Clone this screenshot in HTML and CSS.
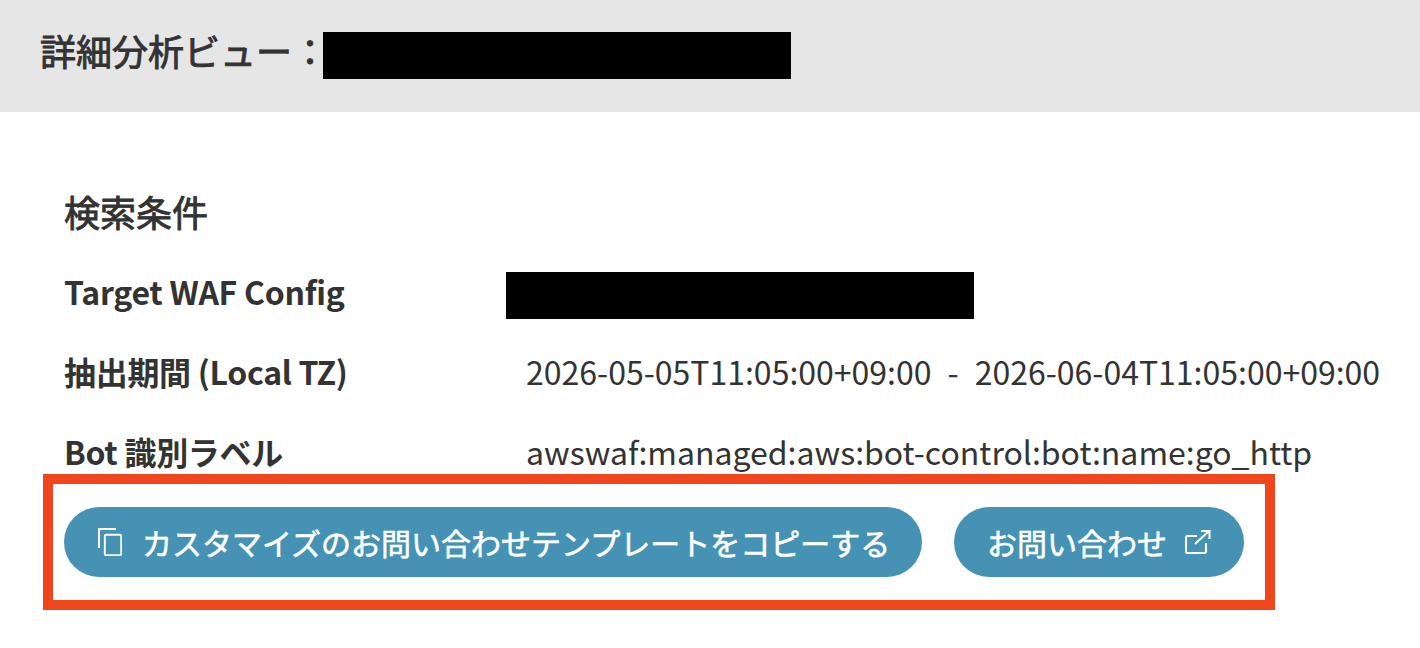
FILE: index.html
```html
<!DOCTYPE html>
<html lang="ja">
<head>
    <meta charset="UTF-8">
    <title>詳細分析ビュー</title>
    <link rel="stylesheet" href="styles.css">
</head>
<body>
    <div class="page">
        <header class="view-header">
            <h1>詳細分析ビュー：</h1>
            <div class="redacted"></div>
        </header>
        <section class="conditions">
            <h2>検索条件</h2>
            <div class="row">
                <div class="label">Target WAF Config</div>
                <div class="redacted redacted-config"></div>
            </div>
            <div class="row">
                <div class="label">抽出期間 (Local TZ)</div>
                <div class="value">2026-05-05T11:05:00+09:00<span class="sep">-</span>2026-06-04T11:05:00+09:00</div>
            </div>
            <div class="row">
                <div class="label">Bot 識別ラベル</div>
                <div class="value">awswaf:managed:aws:bot-control:bot:name:go_http</div>
            </div>
            <div class="actions">
                <button class="pill pill-copy">
                    <svg class="icon-copy" viewBox="0 0 24 28" fill="none" stroke="currentColor" stroke-width="1.9">
                        <path d="M1 20V1H18"/>
                        <rect x="6.8" y="6.8" width="16.4" height="20.4" rx="1.5"/>
                    </svg>
                    カスタマイズのお問い合わせテンプレートをコピーする
                </button>
                <button class="pill pill-contact">
                    お問い合わせ
                    <svg class="icon-external" viewBox="0 0 26 24" fill="none" stroke="currentColor" stroke-width="2.1">
                        <path d="M12 6H2.5A1.5 1.5 0 0 0 1 7.5v14A1.5 1.5 0 0 0 2.5 23h17a1.5 1.5 0 0 0 1.5-1.5V13"/>
                        <path d="M10 14L24 1M16 1h8.5V9"/>
                    </svg>
                </button>
            </div>
        </section>
        <div class="highlight"></div>
    </div>
</body>
</html>
```

FILE: styles.css
```css
html, body {
    margin: 0;
    padding: 0;
    background: #fff;
}
.page {
    position: relative;
    width: 1420px;
    height: 648px;
    overflow: hidden;
    font-family: "Noto Sans CJK JP", "Noto Sans", sans-serif;
    color: #333;
}
.view-header {
    display: flex;
    align-items: flex-start;
    height: 112px;
    padding: 32px 0 0 40px;
    box-sizing: border-box;
    background: #e6e6e6;
}
.view-header h1 {
    margin: 0;
    width: 283px;
    font-size: 36px;
    font-weight: 400;
    -webkit-text-stroke: 0.9px #333;
    line-height: 36px;
    white-space: nowrap;
}
.redacted {
    width: 468px;
    height: 47px;
    background: #000;
}
.conditions {
    padding: 59px 0 0 64px;
}
.conditions h2 {
    margin: 0;
    height: 80px;
    font-size: 36px;
    font-weight: 400;
    -webkit-text-stroke: 0.9px #333;
    line-height: 80px;
}
.row {
    display: flex;
    align-items: center;
    height: 80px;
}
.label {
    width: 462px;
    font-size: 32px;
    font-weight: 700;
    letter-spacing: -0.3px;
    white-space: nowrap;
}
.value {
    font-size: 32px;
    white-space: nowrap;
}
.sep {
    margin: 0 16px;
}
.redacted-config {
    margin-left: -20px;
    margin-top: 9px;
}
.actions {
    display: flex;
    gap: 32px;
    padding: 16px 0 0 0;
}
.pill {
    display: flex;
    align-items: center;
    height: 70px;
    border: none;
    border-radius: 35px;
    background: #4592b5;
    color: #fff;
    font-family: inherit;
    font-size: 30px;
    font-weight: 400;
    -webkit-text-stroke: 0.6px #fff;
    white-space: nowrap;
    cursor: pointer;
}
.pill-copy {
    width: 858px;
    padding: 0 0 0 34px;
    gap: 20px;
}
.pill-contact {
    width: 290px;
    padding: 0 0 0 33px;
    gap: 18px;
}
.icon-copy {
    width: 24px;
    height: 28px;
    flex: none;
}
.icon-external {
    width: 26px;
    height: 24px;
    flex: none;
}
.highlight {
    position: absolute;
    left: 43px;
    top: 474px;
    width: 1232px;
    height: 136px;
    box-sizing: border-box;
    border: 10px solid #f0461e;
}
```
